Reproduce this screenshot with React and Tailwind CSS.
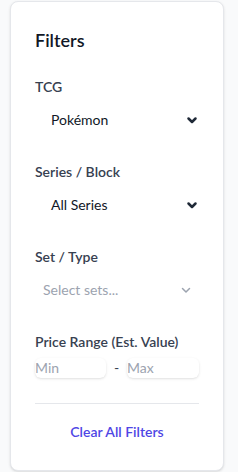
import React from "react";

function Chevron({ className }) {
  return (
    <svg viewBox="0 0 12 12" className={className} fill="none" stroke="currentColor" strokeLinecap="round" strokeLinejoin="round">
      <path d="M2.5 4.5 6 8l3.5-3.5" />
    </svg>
  );
}

export default function App() {
  return (
    <div className="min-h-[472px] bg-[#f9fafb] pl-[10px] pr-[14px] pt-px font-['Lato',sans-serif]">
      <div className="rounded-lg border border-[#e5e7eb] bg-white px-6 pt-6 pb-[27px] shadow-sm">
        <h2 className="text-lg font-semibold leading-7 text-[#111827]">Filters</h2>
        <div className="mt-[23px] flex flex-col gap-6">
          <div>
            <div className="text-sm font-semibold leading-5 text-[#374151]">TCG</div>
            <div className="mt-1 flex h-[37px] items-center justify-between pl-4 pr-[1px] text-sm text-[#111827]">
              <span>Pokémon</span>
              <Chevron className="h-3 w-3 stroke-[2.5] text-[#1f2937]" />
            </div>
          </div>
          <div>
            <div className="text-sm font-semibold leading-5 text-[#374151]">Series / Block</div>
            <div className="mt-1 flex h-[37px] items-center justify-between pl-4 pr-[1px] text-sm text-[#111827]">
              <span>All Series</span>
              <Chevron className="h-3 w-3 stroke-[2.5] text-[#1f2937]" />
            </div>
          </div>
          <div>
            <div className="text-sm font-semibold leading-5 text-[#374151]">Set / Type</div>
            <div className="mt-1 flex h-[37px] items-center justify-between pl-2 pr-[7px] text-sm text-[#9ca3af]">
              <span>Select sets...</span>
              <Chevron className="h-3 w-3 stroke-[1.5] text-[#9ca3af]" />
            </div>
          </div>
          <div>
            <div className="text-sm font-semibold leading-5 text-[#374151]">Price Range (Est. Value)</div>
            <div className="mt-[6px] flex items-center justify-between">
              <input placeholder="Min" className="h-5 w-[71px] min-w-0 rounded-md text-sm text-[#111827] shadow-sm outline-none placeholder:text-[#9ca3af]" />
              <span className="text-sm text-[#374151]">-</span>
              <input placeholder="Max" className="h-5 w-[72px] min-w-0 rounded-md text-sm text-[#111827] shadow-sm outline-none placeholder:text-[#9ca3af]" />
            </div>
          </div>
        </div>
        <div className="mt-[25px] border-t border-[#e5e7eb] pt-[15px] text-center">
          <button className="text-sm font-semibold leading-5 text-[#4f46e5]">Clear All Filters</button>
        </div>
      </div>
    </div>
  );
}
